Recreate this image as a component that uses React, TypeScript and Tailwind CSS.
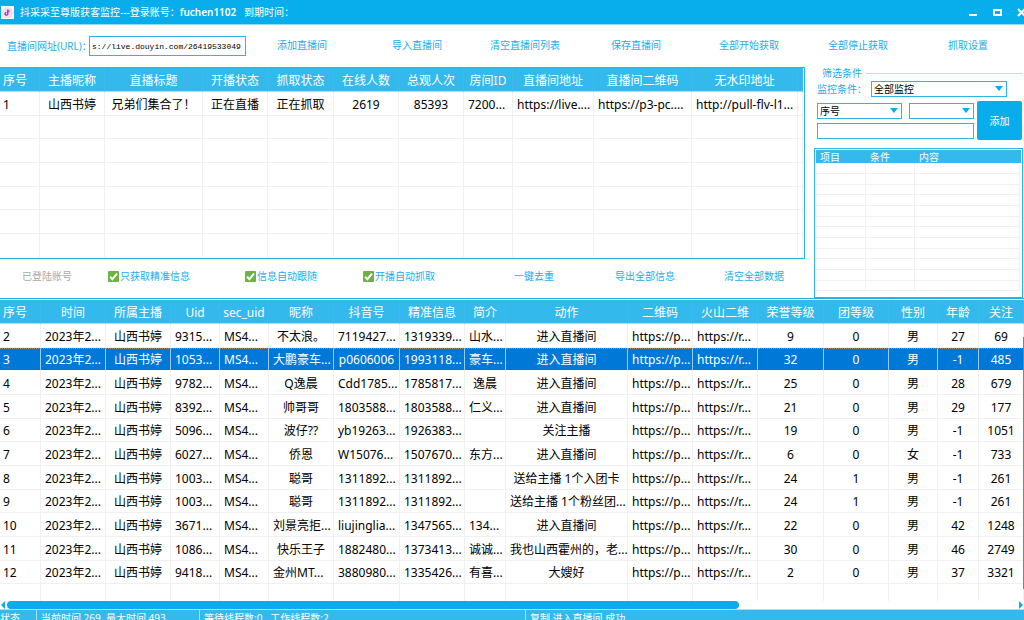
import type { ReactNode } from "react";

const toolbarActions = [
  "添加直播间",
  "导入直播间",
  "清空直播间列表",
  "保存直播间",
  "全部开始获取",
  "全部停止获取",
  "抓取设置",
];

const roomHeads = [
  "序号",
  "主播昵称",
  "直播标题",
  "开播状态",
  "抓取状态",
  "在线人数",
  "总观人次",
  "房间ID",
  "直播间地址",
  "直播间二维码",
  "无水印地址",
  "",
];
const roomCols = [
  "w-[40px]",
  "w-[65px]",
  "w-[98px]",
  "w-[65px]",
  "w-[66px]",
  "w-[65px]",
  "w-[65px]",
  "w-[49px]",
  "w-[81px]",
  "w-[98px]",
  "w-[106px]",
  "",
];
const room = [
  "1",
  "山西书婷",
  "兄弟们集合了！",
  "正在直播",
  "正在抓取",
  "2619",
  "85393",
  "7200...",
  "https://live....",
  "https://p3-pc....",
  "http://pull-flv-l1...",
  "",
];

const userHeads = [
  "序号",
  "时间",
  "所属主播",
  "Uid",
  "sec_uid",
  "昵称",
  "抖音号",
  "精准信息",
  "简介",
  "动作",
  "二维码",
  "火山二维",
  "荣誉等级",
  "团等级",
  "性别",
  "年龄",
  "关注",
];
const userCols = [
  "w-[41px]",
  "w-[65px]",
  "w-[65px]",
  "w-[49px]",
  "w-[49px]",
  "w-[65px]",
  "w-[66px]",
  "w-[65px]",
  "w-[41px]",
  "w-[122px]",
  "w-[65px]",
  "w-[65px]",
  "w-[66px]",
  "w-[65px]",
  "w-[49px]",
  "w-[41px]",
  "",
];

type User = [
  id: string,
  uid: string,
  nick: string,
  douyin: string,
  exact: string,
  intro: string,
  action: string,
  honor: string,
  group: string,
  sex: string,
  age: string,
  follow: string,
];

const users: User[] = [
  ["2", "9315...", "不太浪。", "7119427...", "1319339...", "山水...", "进入直播间", "9", "0", "男", "27", "69"],
  ["3", "1053...", "大鹏豪车...", "p0606006", "1993118...", "豪车...", "进入直播间", "32", "0", "男", "-1", "485"],
  ["4", "9782...", "Q逸晨", "Cdd1785...", "1785817...", "逸晨", "进入直播间", "25", "0", "男", "28", "679"],
  ["5", "8392...", "帅哥哥", "1803588...", "1803588...", "仁义...", "进入直播间", "21", "0", "男", "29", "177"],
  ["6", "5096...", "波仔??", "yb19263...", "1926383...", "", "关注主播", "19", "0", "男", "-1", "1051"],
  ["7", "6027...", "侨恩", "W15076...", "1507670...", "东方...", "进入直播间", "6", "0", "女", "-1", "733"],
  ["8", "1003...", "聪哥", "1311892...", "1311892...", "", "送给主播 1个入团卡", "24", "1", "男", "-1", "261"],
  ["9", "1003...", "聪哥", "1311892...", "1311892...", "", "送给主播 1个粉丝团...", "24", "1", "男", "-1", "261"],
  ["10", "3671...", "刘景亮拒...", "liujinglia...", "1347565...", "134...", "进入直播间", "22", "0", "男", "42", "1248"],
  ["11", "1086...", "快乐王子", "1882480...", "1373413...", "诚诚...", "我也山西霍州的，老...", "30", "0", "男", "46", "2749"],
  ["12", "9418...", "金州MT...", "3880980...", "1335426...", "有喜...", "大嫂好", "2", "0", "男", "37", "3321"],
];

const expand = ([id, uid, nick, douyin, exact, intro, action, ...rest]: User) => [
  id,
  "2023年2...",
  "山西书婷",
  uid,
  "MS4...",
  nick,
  douyin,
  exact,
  intro,
  action,
  "https://p...",
  "https://r...",
  ...rest,
];

const rowHeight = "h-6 nth-[3n+2]:h-[23px]";

function Cell({ text, first, selected }: { text: string; first?: boolean; selected?: boolean }) {
  const align = first ? "pl-[3px] text-left" : text.endsWith("...") ? "pl-1 text-left" : "text-center";
  const line = selected
    ? "border-r border-b border-r-[#9ccbf0] border-b-white border-t border-t-[#a08a70] [border-top-style:dotted]"
    : "border-r border-b border-[#f0f0f0] pt-0.5";
  return <td className={`overflow-hidden pr-0 pb-0 whitespace-nowrap ${align} ${line}`}>{text}</td>;
}

function HeadRow({ heads }: { heads: string[] }) {
  return (
    <tr className="h-6 bg-[#33b9ec] text-white">
      {heads.map((h, i) => (
        <th
          key={i}
          className={`border-r border-b border-r-[#38bbed] border-b-[#a5e0f8] pt-0.5 pr-0 pb-0 font-normal whitespace-nowrap ${
            i === 0 ? "pl-[3px] text-left" : "pl-0 text-center"
          }`}
        >
          {h}
        </th>
      ))}
    </tr>
  );
}

function RoomTable() {
  return (
    <div className="border-y border-r border-[#2bb5ec] pr-px">
      <table className="w-full table-fixed border-separate border-spacing-0 text-xs leading-4">
        <colgroup>
          {roomCols.map((c, i) => (
            <col key={i} className={c} />
          ))}
        </colgroup>
        <thead>
          <HeadRow heads={roomHeads} />
        </thead>
        <tbody>
          <tr className={rowHeight}>
            {room.map((t, i) => (
              <Cell key={i} text={t} first={i === 0} />
            ))}
          </tr>
          {[2, 3, 4, 5, 6, 7].map((r) => (
            <tr key={r} className={rowHeight}>
              {room.map((_, i) => (
                <Cell key={i} text="" />
              ))}
            </tr>
          ))}
        </tbody>
      </table>
    </div>
  );
}

function UserTable() {
  return (
    <section className="relative shrink-0 grow border-t border-[#1fb0ea] pt-px">
      <table className="w-full table-fixed border-separate border-spacing-0 text-xs leading-4">
        <colgroup>
          {userCols.map((c, i) => (
            <col key={i} className={c} />
          ))}
        </colgroup>
        <thead>
          <HeadRow heads={userHeads} />
        </thead>
        <tbody>
          {users.map((u) => {
            const selected = u[0] === "3";
            return (
              <tr key={u[0]} className={`${rowHeight} ${selected ? "bg-[#0078d7] text-white" : ""}`}>
                {expand(u).map((t, i) => (
                  <Cell key={i} text={t} first={i === 0} selected={selected} />
                ))}
              </tr>
            );
          })}
          <tr className="h-[17px]">
            {userHeads.map((h) => (
              <td key={h} className="border-r border-[#f0f0f0] p-0" />
            ))}
          </tr>
        </tbody>
      </table>
      <div className="absolute top-[38px] right-0 bottom-5 w-px bg-[#08adec]" />
      <div className="flex h-2 items-center gap-px">
        <svg viewBox="0 0 6 8" className="h-2 w-1.5 fill-[#08adec]">
          <path d="M5 0v8L1 4z" />
        </svg>
        <div className="h-2 flex-1">
          <div className="h-2 w-[72.5%] rounded-full bg-[#08adec]" />
        </div>
        <svg viewBox="0 0 6 8" className="h-2 w-1.5 fill-[#08adec]">
          <path d="M1 0v8l4-4z" />
        </svg>
      </div>
    </section>
  );
}

function Combo({ label, options, className }: { label: string; options: string[]; className: string }) {
  return (
    <div className={`relative ${className}`}>
      <select
        aria-label={label}
        className="block h-4 w-full appearance-none border border-[#2bb5ec] bg-white pl-0.5 text-[10px] leading-none text-black outline-none"
      >
        {options.map((o) => (
          <option key={o}>{o}</option>
        ))}
      </select>
      <svg viewBox="0 0 8 5" className="pointer-events-none absolute top-[5px] right-1 h-[5px] w-2 fill-[#08adec]">
        <path d="M0 0h8L4 5z" />
      </svg>
    </div>
  );
}

function FilterPanel() {
  return (
    <aside className="flex w-[210px] shrink-0 flex-col pr-px text-[10px] leading-3 text-[#1aaeea]">
      <div className="flex items-center gap-1 pl-2">
        <span>筛选条件</span>
        <span className="h-px flex-1 bg-[#b4e4f8]" />
      </div>
      <div className="mt-[2px] flex items-center pr-4 pl-[3px]">
        <span className="w-[54px]">监控条件：</span>
        <Combo label="监控条件" options={["全部监控"]} className="flex-1" />
      </div>
      <div className="mt-1 flex items-center gap-[3px] pr-px pl-[3px]">
        <div className="flex flex-1 flex-col gap-1">
          <div className="flex gap-[7px]">
            <Combo label="项目" options={["序号"]} className="w-[85px]" />
            <Combo label="条件" options={[""]} className="flex-1" />
          </div>
          <input aria-label="内容" className="h-4 w-full border border-[#2bb5ec] px-1 outline-none" />
        </div>
        <button className="h-[39px] w-[45px] rounded-xs bg-[#08adec] text-white">添加</button>
      </div>
      <div className="mt-2 flex-1 border border-[#2bb5ec] p-px pb-0">
        <table className="w-full table-fixed border-separate border-spacing-0">
          <colgroup>
            <col className="w-[50px]" />
            <col className="w-[49px]" />
            <col />
            <col className="w-px" />
          </colgroup>
          <thead>
            <tr className="h-[13px] bg-[#33b9ec] text-left text-white">
              {["项目", "条件", "内容", ""].map((h) => (
                <th key={h} className="p-0 pl-1 font-normal last:pl-0">
                  {h}
                </th>
              ))}
            </tr>
          </thead>
          <tbody>
            {Array.from({ length: 12 }, (_, r) => (
              <tr key={r} className="h-[11px] nth-[3n]:h-[10px]">
                <td className="border-r border-b border-[#f0f0f0] p-0" />
                <td className="border-r border-b border-[#f0f0f0] p-0" />
                <td className="border-r border-b border-[#f0f0f0] p-0" />
                <td className="p-0" />
              </tr>
            ))}
          </tbody>
        </table>
      </div>
    </aside>
  );
}

function Check({ children }: { children: ReactNode }) {
  return (
    <label className="flex items-center gap-px">
      <span className="relative size-[11px]">
        <input type="checkbox" defaultChecked className="block size-[11px] appearance-none rounded-[1px] bg-[#6ab344]" />
        <svg
          viewBox="0 0 11 11"
          className="pointer-events-none absolute inset-0 fill-none stroke-white stroke-2"
        >
          <path d="M2 5.8l2.4 2.4L9 2.6" />
        </svg>
      </span>
      {children}
    </label>
  );
}

export default function App() {
  return (
    <div className="flex h-screen flex-col overflow-hidden bg-white font-['Noto_Sans','Noto_Sans_CJK_SC',sans-serif] text-black">
      <header className="flex h-[25px] shrink-0 items-center border-b border-[#8fd9f7] bg-[#08adec] pl-px text-[10px] text-white">
        <svg viewBox="0 0 13 13" className="size-[13px]">
          <rect width="13" height="13" fill="#f6fbfe" />
          <circle cx="6.5" cy="6.5" r="5.6" fill="#ecdff5" />
          <path d="M7 3.6v4.2a1.4 1.4 0 1 1-1.4-1.4M7 3.8c.3 1 .9 1.5 2 1.6" fill="none" stroke="#ef4b8b" strokeWidth="1.2" />
          <path d="M6.6 3.6v4.2a1.4 1.4 0 1 1-1.4-1.4" fill="none" stroke="#6a4fd0" strokeWidth="1" />
        </svg>
        <h1 className="flex-1 pl-1.5 whitespace-pre">
          抖采采至尊版获客监控---登录账号：<span className="font-semibold">fuchen1102</span>
          {"   到期时间："}
        </h1>
        <div className="-mr-[9px] flex">
          <button aria-label="最小化" className="flex w-6 justify-center">
            <svg viewBox="0 0 9 9" className="size-[9px] fill-white">
              <path d="M0 6h8v2H0z" />
            </svg>
          </button>
          <button aria-label="最大化" className="flex w-6 justify-center">
            <svg viewBox="0 0 9 9" className="size-[9px] fill-none stroke-white stroke-2">
              <path d="M1 2h7v5H1z" />
            </svg>
          </button>
          <button aria-label="关闭" className="flex w-6 justify-center">
            <svg viewBox="0 0 9 9" className="size-[9px] fill-none stroke-white stroke-2">
              <path d="M1 1l7 7M8 1L1 8" />
            </svg>
          </button>
        </div>
      </header>

      <div className="flex h-[42px] shrink-0 items-center pl-[7px] text-[10px] text-[#1aaeea]">
        <label htmlFor="url" className="w-[82px] whitespace-nowrap">
          直播间网址(URL)：
        </label>
        <input
          id="url"
          defaultValue="s://live.douyin.com/26419533049"
          className="h-5 w-[157px] border border-[#2bb5ec] pl-0.5 font-['Liberation_Mono',monospace] text-[8px] text-black outline-none"
        />
        <nav className="grid flex-1 grid-cols-[115fr_98fr_121fr_108fr_109fr_120fr_76fr] pb-0.5 pl-[31px] text-left">
          {toolbarActions.map((a) => (
            <button key={a} className="text-left whitespace-nowrap">
              {a}
            </button>
          ))}
        </nav>
      </div>

      <div className="flex shrink-0 gap-[9px]">
        <div className="min-w-0 flex-1">
          <RoomTable />
          <div className="grid h-[39px] grid-cols-[86fr_137fr_118fr_151fr_101fr_109fr_81fr] items-center pb-1 pl-[22px] text-left text-[10px] whitespace-nowrap text-[#1aaeea]">
            <button className="text-left text-[#a8a8a8]">已登陆账号</button>
            <Check>只获取精准信息</Check>
            <Check>信息自动跟随</Check>
            <Check>开播自动抓取</Check>
            <button className="text-left">一键去重</button>
            <button className="text-left">导出全部信息</button>
            <button className="text-left">清空全部数据</button>
          </div>
        </div>
        <FilterPanel />
      </div>

      <UserTable />

      <footer className="flex shrink-0 border-t border-[#a5e0f8] bg-[#33b9ec] text-[10px] leading-4 whitespace-pre text-white">
        <span className="w-9">状态</span>
        <span className="w-[163px] border-l border-[#a5e0f8] pl-1">当前时间 269  最大时间 493</span>
        <span className="w-[326px] border-l border-[#a5e0f8] pl-1">等待线程数:0   工作线程数:2</span>
        <span className="flex-1 border-l border-[#a5e0f8] pl-1">复制 进入直播间 成功</span>
      </footer>
    </div>
  );
}
